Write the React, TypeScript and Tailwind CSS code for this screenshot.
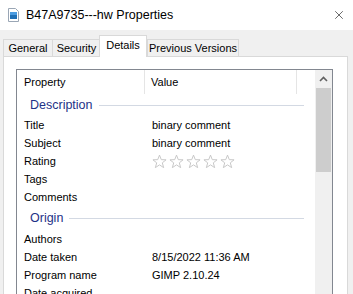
import { X } from 'lucide-react';

const DESCRIPTION = [
  { name: 'Title', value: 'binary comment' },
  { name: 'Subject', value: 'binary comment' },
  { name: 'Rating', value: 'stars' },
  { name: 'Tags', value: '' },
  { name: 'Comments', value: '' },
];

const ORIGIN = [
  { name: 'Authors', value: '' },
  { name: 'Date taken', value: '8/15/2022 11:36 AM' },
  { name: 'Program name', value: 'GIMP 2.10.24' },
  { name: 'Date acquired', value: '' },
];

const TABS = [
  { label: 'General', w: 'w-[50px]' },
  { label: 'Security', w: 'w-[49px]' },
  { label: 'Details', w: 'w-[48px]' },
  { label: 'Previous Versions', w: 'w-[92px]' },
];

export default function App() {
  return (
    <div className="w-[353px] h-[294px] overflow-hidden bg-[#f0f0f0] text-[11px] text-black font-['Liberation_Sans',Arial,sans-serif]">
      {/* title bar */}
      <div className="h-[30px] bg-white flex items-center">
        <FileIcon />
        <span className="ml-[7px] text-[12.5px]">B47A9735---hw Properties</span>
        <X className="ml-auto mr-[7px]" size={14} strokeWidth={1} />
      </div>

      {/* tabs */}
      <div className="h-[27px] flex items-end pl-[3px]">
        {TABS.map(t => (
          <Tab key={t.label} label={t.label} w={t.w} active={t.label === 'Details'} />
        ))}
      </div>

      {/* panel */}
      <div className="relative -mt-px ml-[3px] mr-[5px] h-[300px] bg-white border border-[#d9d9d9] pl-[12px] pr-[14px] pt-[12px]">
        <div className="flex h-full border border-[#828790]">
          <div className="flex-1 flex flex-col">
            {/* header */}
            <div className="h-[24px] flex items-stretch shrink-0">
              <div className="w-[128px] flex items-center pl-[7px] border-r border-[#e5e5e5]">Property</div>
              <div className="w-[152px] flex items-center pl-[6px] border-r border-[#e5e5e5]">Value</div>
            </div>
            <Group title="Description" h="h-[22px]" />
            {DESCRIPTION.map(r => <Row key={r.name} {...r} />)}
            <Group title="Origin" h="h-[24px]" />
            {ORIGIN.map(r => <Row key={r.name} {...r} />)}
          </div>
          {/* scrollbar */}
          <div className="w-[17px] bg-[#f0f0f0] flex flex-col items-center">
            <div className="h-[18px] w-full flex items-center justify-center">
              <svg width="9" height="6" viewBox="0 0 9 6">
                <path d="M1 5 L4.5 1.5 L8 5" fill="none" stroke="#606060" strokeWidth="1.6" />
              </svg>
            </div>
            <div className="w-[15px] h-[84px] bg-[#cdcdcd]" />
          </div>
        </div>
      </div>
    </div>
  );
}

function Tab({ label, w, active }: { label: string; w: string; active: boolean }) {
  if (active) {
    return (
      <div className={`relative z-10 -ml-px ${w} h-[22px] flex items-center justify-center bg-white border border-b-0 border-[#d9d9d9] pb-[2px]`}>
        {label}
      </div>
    );
  }
  return (
    <div className={`${w} h-[18px] flex items-center justify-center bg-[#f0f0f0] border border-b-0 border-[#d9d9d9] -mr-px`}>
      {label}
    </div>
  );
}

function Group({ title, h }: { title: string; h: string }) {
  return (
    <div className={`${h} flex items-center pl-[13px] pr-[11px] shrink-0`}>
      <span className="text-[12.5px] text-[#1e3287]">{title}</span>
      <div className="flex-1 ml-[6px] h-px bg-[#d3d9e3]" />
    </div>
  );
}

function Row({ name, value }: { name: string; value: string }) {
  return (
    <div className="h-[18px] flex items-center shrink-0">
      <div className="w-[128px] pl-[7px]">{name}</div>
      <div className="pl-[7px]">
        {value === 'stars' ? <Stars /> : value}
      </div>
    </div>
  );
}

function Stars() {
  return (
    <div className="flex gap-[2px]">
      {[0, 1, 2, 3, 4].map(i => (
        <svg key={i} width="15" height="15" viewBox="0 0 16 16">
          <path
            d="M8 1.2 L9.9 6 L15 6.2 L11 9.4 L12.4 14.5 L8 11.6 L3.6 14.5 L5 9.4 L1 6.2 L6.1 6 Z"
            fill="none"
            stroke="#c4c4c4"
            strokeWidth="1"
          />
        </svg>
      ))}
    </div>
  );
}

function FileIcon() {
  return (
    <svg className="ml-[8px]" width="11" height="14" viewBox="0 0 11 14">
      <path d="M0.5 0.5 H7.5 L10.5 3.5 V13.5 H0.5 Z" fill="#fff" stroke="#9aa6b5" />
      <rect x="2" y="4" width="7" height="7" fill="#1f6fb5" />
      <rect x="2" y="4" width="7" height="3" fill="#4a9be0" />
    </svg>
  );
}
